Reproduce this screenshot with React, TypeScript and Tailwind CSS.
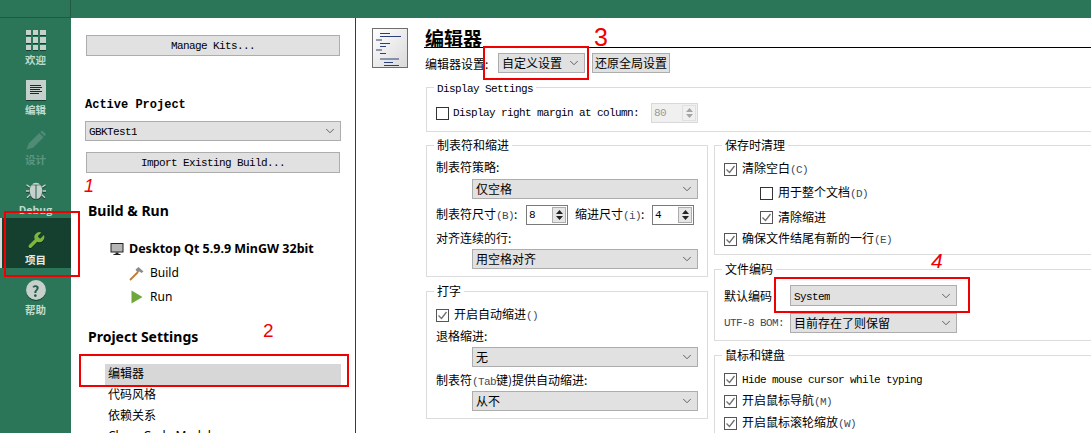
import React from 'react';
import { ChevronDown } from 'lucide-react';

const Mono: React.FC<{ children: React.ReactNode; className?: string }> = ({ children, className = '' }) => (
    <span className={`whitespace-nowrap font-['Liberation_Mono',monospace] text-[11px] tracking-[-0.6px] ${className}`}>{children}</span>
);

const Key: React.FC<{ children: React.ReactNode }> = ({ children }) => (
    <Mono className="text-[#3d4a63]">{children}</Mono>
);

const PushButton: React.FC<{ children: React.ReactNode; className?: string }> = ({ children, className = '' }) => (
    <div className={`flex items-center justify-center border border-[#adadad] bg-[#e1e1e1] ${className}`}>{children}</div>
);

const Combo: React.FC<{ children: React.ReactNode; className?: string }> = ({ children, className = '' }) => (
    <div className={`flex items-center justify-between border border-[#adadad] bg-[#e1e1e1] pl-[3px] pr-[3px] ${className}`}>
        <span className="truncate">{children}</span>
        <ChevronDown size={14} strokeWidth={1.4} color="#444" className="shrink-0" />
    </div>
);

const Check: React.FC<{ checked?: boolean }> = ({ checked }) => (
    <div className={`flex h-[13px] w-[13px] shrink-0 items-center justify-center border ${checked ? 'border-[#555]' : 'border-[#333]'} bg-white`}>
        {checked && (
            <svg width="11" height="11" viewBox="0 0 11 11">
                <path d="M1.5 5.5 L4.5 8.5 L9.5 2" fill="none" stroke="#6f6f6f" strokeWidth="1.3" />
            </svg>
        )}
    </div>
);

const CheckRow: React.FC<{ checked?: boolean; className?: string; children: React.ReactNode }> = ({ checked, className = '', children }) => (
    <div className={`flex h-4 items-center gap-[5px] ${className}`}>
        <Check checked={checked} />
        <span>{children}</span>
    </div>
);

const Spin: React.FC<{ value: string; disabled?: boolean; className?: string }> = ({ value, disabled, className = '' }) => (
    <div className={`flex h-5 items-center justify-between border pl-[2px] pr-[1px] ${disabled ? 'border-[#d9d9d9] bg-[#f0f0f0] text-[#9a9a9a]' : 'border-[#7a7a7a] bg-white text-black'} ${className}`}>
        <Mono>{value}</Mono>
        <div className={`flex h-[16px] w-[14px] flex-col items-center justify-center gap-[2px] border ${disabled ? 'border-[#e0e0e0]' : 'border-[#adadad] bg-[#e6e6e6]'}`}>
            <svg width="7" height="4" viewBox="0 0 7 4"><path d="M3.5 0 L7 4 L0 4 Z" fill={disabled ? '#a5a5a5' : '#222'} /></svg>
            <svg width="7" height="4" viewBox="0 0 7 4"><path d="M0 0 L7 0 L3.5 4 Z" fill={disabled ? '#a5a5a5' : '#222'} /></svg>
        </div>
    </div>
);

const Group: React.FC<{ title: React.ReactNode; className?: string; children: React.ReactNode }> = ({ title, className = '', children }) => (
    <div className={`relative border border-[#dcdcdc] pl-[9px] ${className}`}>
        <div className="absolute -top-[9px] left-[7px] bg-white px-[3px] leading-4">{title}</div>
        {children}
    </div>
);

const NavItem: React.FC<{ label: string; active?: boolean; disabled?: boolean; children: React.ReactNode }> = ({ label, active, disabled, children }) => (
    <div className={`relative flex h-[50px] flex-col items-center ${active ? 'bg-[#153f2e]' : ''}`}>
        {active && <div className="absolute bottom-0 left-0 top-0 w-[2px] bg-[#d9d9d9]" />}
        <div className="mt-[12px] flex h-5 w-5 items-center justify-center">{children}</div>
        <span className={`mt-[3px] text-[10.5px] font-bold leading-[14px] ${disabled ? 'text-[#5c9682]' : active ? 'text-[#e4ece8]' : 'text-[#bfdcd0]'}`}>{label}</span>
    </div>
);

const GridIcon = () => (
    <div className="grid h-5 w-5 grid-cols-3 gap-[2px] drop-shadow-[0_1px_0_#173f30]">
        {Array.from({ length: 9 }).map((_, i) => (
            <div key={i} className="bg-[#c6d0cc]" />
        ))}
    </div>
);

const EditIcon = () => (
    <svg width="20" height="20" viewBox="0 0 20 20" className="drop-shadow-[0_1px_0_#173f30]">
        <rect width="20" height="20" fill="#c6d0cc" />
        <path d="M4 5.5H15M4 7.5H16M4 9.5H14M4 11.5H16M4 13.5H13" stroke="#1d2b26" strokeWidth="1" />
    </svg>
);

const PencilIcon = () => (
    <svg width="21" height="21" viewBox="0 0 21 21">
        <path d="M0.5 20 L3 13.5 L14 2.5 L18.5 7 L7.5 18 Z" fill="#4f8b75" />
        <path d="M15 1.5 L17 0 L21 4 L19.5 6 Z" fill="#4f8b75" />
    </svg>
);

const BugIcon = () => (
    <svg width="21" height="21" viewBox="0 0 21 21" className="drop-shadow-[0_1px_0_#173f30]">
        <path d="M6.5 4.5 C7 1.5 14 1.5 14.5 4.5 Z" fill="#c6d0cc" />
        <path d="M10 5 L10 19.5 C6 19.5 4 15 4 10 C4 7.5 5 5.5 6 5 Z M11 5 L11 19.5 C15 19.5 17 15 17 10 C17 7.5 16 5.5 15 5 Z" fill="#c6d0cc" />
        <path d="M4 7 L0.5 4.5 M3.5 11 L0 11 M4.5 15 L1 18 M17 7 L20.5 4.5 M17.5 11 L21 11 M16.5 15 L20 18" stroke="#c6d0cc" strokeWidth="1.4" />
    </svg>
);

const WrenchIcon = () => (
    <svg width="21" height="21" viewBox="0 0 24 24" className="drop-shadow-[0_1px_0_#0d2a1f]">
        <path
            d="M14.7 6.3a1 1 0 0 0 0 1.4l1.6 1.6a1 1 0 0 0 1.4 0l3.77-3.77a6 6 0 0 1-7.94 7.94l-6.91 6.91a2.12 2.12 0 0 1-3-3l6.91-6.91a6 6 0 0 1 7.94-7.94l-3.76 3.76z"
            fill="#7cb63c"
        />
    </svg>
);

const HelpIcon = () => (
    <div className="flex h-5 w-5 items-center justify-center rounded-full bg-[#c6d0cc] text-[15px] font-bold leading-none text-[#2b5a49] drop-shadow-[0_1px_0_#173f30]">?</div>
);

const MonitorIcon = () => (
    <svg width="14" height="14" viewBox="0 0 14 14">
        <rect x="1" y="1.5" width="12" height="8.5" fill="#b5b5b5" stroke="#222" strokeWidth="1" />
        <path d="M5.5 10.5H8.5V12H10.5V13H3.5V12H5.5Z" fill="#222" />
    </svg>
);

const HammerIcon = () => (
    <svg width="15" height="15" viewBox="0 0 15 15">
        <path d="M1 14 L9 6" stroke="#c2792f" strokeWidth="1.8" />
        <path d="M6.5 3.5 L9.5 1 L14.5 5.5 L12.5 7 L10.5 5.5 L8.5 6.5 Z" fill="#8b8b8b" />
    </svg>
);

const PlayIcon = () => (
    <svg width="12" height="14" viewBox="0 0 12 14">
        <path d="M0.5 0.5 L11.5 7 L0.5 13.5 Z" fill="#6ea83a" />
    </svg>
);

const EditorPageIcon = () => (
    <svg width="36" height="40" viewBox="0 0 36 40">
        <defs>
            <linearGradient id="pageFill" x1="0" y1="0" x2="1" y2="1">
                <stop offset="0" stopColor="#ffffff" />
                <stop offset="1" stopColor="#d9d9d9" />
            </linearGradient>
        </defs>
        <rect x="0.5" y="0.5" width="35" height="39" fill="url(#pageFill)" stroke="#6e6e6e" />
        <path d="M8 5.5H18M8 8.5H29M4 12H10M8 15.5H18M8 18.5H14M4 22H10M8 25.5H14M8 31H27M12 34.5H21M12 37.5H27" stroke="#2b3f78" strokeWidth="1" />
    </svg>
);

const Mark: React.FC<{ className: string }> = ({ className }) => (
    <div className={`absolute border-2 border-[#f00000] ${className}`} />
);

const Digit: React.FC<{ className: string; children: React.ReactNode }> = ({ className, children }) => (
    <span className={`absolute font-['Liberation_Sans',sans-serif] leading-none text-[#f00000] ${className}`}>{children}</span>
);

const App: React.FC = () => {
    return (
        <div className="relative flex h-[433px] w-[1091px] flex-col overflow-hidden bg-white font-['Noto_Sans_CJK_SC','Noto_Sans',sans-serif] text-[12px] text-black">
            <div className="flex h-[18px] shrink-0 bg-[#2b7659]">
                <div className="h-full w-[71px] border-b border-r border-[#1f5a44]" />
            </div>

            <div className="flex min-h-0 flex-1">
                {/* mode bar */}
                <div className="w-[71px] shrink-0 bg-[#2b7659]">
                    <NavItem label="欢迎"><GridIcon /></NavItem>
                    <NavItem label="编辑"><EditIcon /></NavItem>
                    <NavItem label="设计" disabled><PencilIcon /></NavItem>
                    <NavItem label="Debug"><BugIcon /></NavItem>
                    <NavItem label="项目" active><WrenchIcon /></NavItem>
                    <NavItem label="帮助"><HelpIcon /></NavItem>
                </div>

                {/* project tree */}
                <div className="w-[285px] shrink-0 border-r border-[#3a3a3a] pt-[17px]">
                    <PushButton className="ml-[15px] h-[21px] w-[254px] pt-[2px]"><Mono>Manage Kits...</Mono></PushButton>
                    <div className="ml-[14px] mt-[41px] font-['Liberation_Mono',monospace] font-bold leading-4">Active Project</div>
                    <Combo className="ml-[14px] mt-[8px] h-5 w-[256px]"><Mono>GBKTest1</Mono></Combo>
                    <PushButton className="ml-[15px] mt-[11px] h-[21px] w-[254px] pt-[2px]"><Mono>Import Existing Build...</Mono></PushButton>

                    <div className="ml-[17px] mt-[28px] font-['Noto_Sans',sans-serif] text-[14px] font-bold leading-5">Build &amp; Run</div>
                    <div className="ml-[39px] mt-[19px] flex h-[18px] items-center gap-[5px] font-['Noto_Sans',sans-serif] text-[12.5px] font-bold">
                        <MonitorIcon />
                        <span>Desktop Qt 5.9.9 MinGW 32bit</span>
                    </div>
                    <div className="ml-[58px] mt-[6px] flex h-[18px] items-center gap-[6px] font-['Noto_Sans',sans-serif]">
                        <HammerIcon />
                        <span>Build</span>
                    </div>
                    <div className="ml-[60px] mt-[6px] flex h-[18px] items-center gap-[7px] font-['Noto_Sans',sans-serif]">
                        <PlayIcon />
                        <span>Run</span>
                    </div>

                    <div className="ml-[17px] mt-[21px] font-['Noto_Sans',sans-serif] text-[14px] font-bold leading-5">Project Settings</div>
                    <div className="ml-[34px] mt-[17px] w-[236px]">
                        <div className="flex h-[21px] items-center bg-[#d7d7d7] pb-[3px] pl-[3px]">编辑器</div>
                        <div className="flex h-[21px] items-center pb-[3px] pl-[3px]">代码风格</div>
                        <div className="flex h-[21px] items-center pb-[3px] pl-[3px]">依赖关系</div>
                        <div className="flex h-[21px] items-center pb-[3px] pl-[3px] font-['Noto_Sans',sans-serif]">Clang Code Model</div>
                    </div>
                </div>

                {/* editor settings */}
                <div className="flex min-w-0 flex-1 pl-4 pt-[10px]">
                    <div className="w-9 shrink-0"><EditorPageIcon /></div>
                    <div className="ml-4 w-[700px] shrink-0">
                        <div className="h-5 border-b border-black pl-px text-[19px] font-bold leading-[19px]">编辑器</div>

                        <div className="ml-px mt-[5px] flex h-5 items-center">
                            <div className="w-[73px] pt-[1px]">编辑器设置:</div>
                            <Combo className="h-5 w-[87px]">自定义设置</Combo>
                            <PushButton className="ml-[7px] h-5 w-[78px]">还原全局设置</PushButton>
                        </div>

                        <Group title={<Mono>Display Settings</Mono>} className="ml-[2px] mt-[14px] h-[45px] pt-[15px]">
                            <div className="flex h-5 items-center">
                                <Check />
                                <Mono className="ml-[4px] w-[186px]">Display right margin at column:</Mono>
                                <Spin value="80" disabled className="ml-[12px] w-[47px]" />
                            </div>
                        </Group>

                        <div className="ml-[2px] mt-[13px] flex gap-[6px]">
                            <div className="w-[282px] shrink-0">
                                <Group title="制表符和缩进" className="h-[132px] pt-[13px]">
                                    <div className="h-4 leading-4">制表符策略:</div>
                                    <Combo className="ml-[36px] mt-[4px] h-5 w-[226px] text-[12px]">仅空格</Combo>
                                    <div className="mt-[6px] flex h-5 items-center">
                                        <span className="w-[90px]">制表符尺寸<Key>(B)</Key>:</span>
                                        <Spin value="8" className="w-[42px]" />
                                        <span className="ml-[7px] w-[77px]">缩进尺寸<Key>(i)</Key>:</span>
                                        <Spin value="4" className="w-[42px]" />
                                    </div>
                                    <div className="mt-[5px] h-4 leading-4">对齐连续的行:</div>
                                    <Combo className="ml-[36px] mt-[3px] h-5 w-[226px]">用空格对齐</Combo>
                                </Group>

                                <Group title="打字" className="mt-[14px] h-[128px] pt-[15px]">
                                    <CheckRow checked>开启自动缩进<Key>()</Key></CheckRow>
                                    <div className="mt-[5px] h-4 leading-4">退格缩进:</div>
                                    <Combo className="ml-[36px] mt-[3px] h-5 w-[226px]">无</Combo>
                                    <div className="mt-[5px] h-4 leading-4">制表符<Key>(Tab</Key>键)提供自动缩进:</div>
                                    <Combo className="ml-[36px] mt-[3px] h-5 w-[226px]">从不</Combo>
                                </Group>
                            </div>

                            <div className="w-[400px] shrink-0">
                                <Group title="保存时清理" className="h-[110px] pt-[15px]">
                                    <CheckRow checked>清除空白<Key>(C)</Key></CheckRow>
                                    <CheckRow className="ml-[36px] mt-[8px]">用于整个文档<Key>(D)</Key></CheckRow>
                                    <CheckRow checked className="ml-[36px] mt-[8px]">清除缩进</CheckRow>
                                    <CheckRow checked className="mt-[6px]">确保文件结尾有新的一行<Key>(E)</Key></CheckRow>
                                </Group>

                                <Group title="文件编码" className="mt-[14px] h-[72px] pt-[15px]">
                                    <div className="flex h-[21px] items-center">
                                        <span className="w-[66px]">默认编码</span>
                                        <Combo className="h-[21px] w-[167px]"><Mono>System</Mono></Combo>
                                    </div>
                                    <div className="mt-[7px] flex h-5 items-center">
                                        <Mono className="w-[66px] text-[#3d4a63]">UTF-8 BOM:</Mono>
                                        <Combo className="h-5 w-[167px]">目前存在了则保留</Combo>
                                    </div>
                                </Group>

                                <Group title="鼠标和键盘" className="mt-[14px] h-[100px] pt-[15px]">
                                    <CheckRow checked><Mono>Hide mouse cursor while typing</Mono></CheckRow>
                                    <CheckRow checked className="mt-[6px]">开启鼠标导航<Key>(M)</Key></CheckRow>
                                    <CheckRow checked className="mt-[6px]">开启鼠标滚轮缩放<Key>(W)</Key></CheckRow>
                                </Group>
                            </div>
                        </div>
                    </div>
                </div>
            </div>

            {/* red annotations on top of the screenshot */}
            <Mark className="left-[4px] top-[211px] h-[66px] w-[76px]" />
            <Mark className="left-[79px] top-[354px] h-[33px] w-[270px]" />
            <Mark className="left-[483px] top-[46px] h-[34px] w-[106px]" />
            <Mark className="left-[774px] top-[277px] h-[36px] w-[196px]" />
            <Digit className="left-[84px] top-[177px] text-[18px] italic">1</Digit>
            <Digit className="left-[263px] top-[321px] text-[19px]">2</Digit>
            <Digit className="left-[594px] top-[25px] text-[25px]">3</Digit>
            <Digit className="left-[931px] top-[250px] text-[21px] italic">4</Digit>
        </div>
    );
};

export default App;
